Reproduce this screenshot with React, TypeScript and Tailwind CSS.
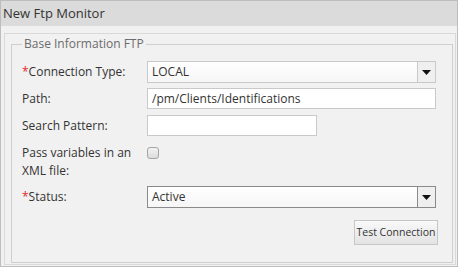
import React from 'react';

const font = { fontFamily: '"Open Sans", "Liberation Sans", sans-serif' };

const Caret: React.FC = () => (
  <svg width="9" height="5" viewBox="0 0 9 5">
    <path d="M0 0 H9 L4.5 5 Z" fill="#111" />
  </svg>
);

const Label: React.FC<{ text: string; required?: boolean }> = ({ text, required }) => (
  <div className="w-[125px] shrink-0 text-[12px] leading-[18px] text-[#333]">
    {required && <span className="text-[#e0262b]">*</span>}
    {text}
  </div>
);

const Select: React.FC<{ value: string; dark?: boolean }> = ({ value, dark }) => (
  <div
    className={`flex h-[22px] w-[289px] border bg-gradient-to-b from-white to-[#f6f6f6] ${
      dark ? 'border-[#8a8a8a]' : 'border-[#c9c9c9]'
    }`}
  >
    <div className="flex-1 px-[4px] text-[12px] leading-[20px] text-[#333]">{value}</div>
    <div
      className={`flex w-[18px] items-center justify-center border-l bg-[#efefef] ${
        dark ? 'border-[#8a8a8a]' : 'border-[#c9c9c9]'
      }`}
    >
      <Caret />
    </div>
  </div>
);

export default function App() {
  return (
    <div style={font} className="flex h-[267px] w-[458px] flex-col border border-[#bdbdbd] bg-[#f1f1f1]">
      <div className="h-[25px] shrink-0 bg-[#dbdbdb] pl-[2px] text-[13px] leading-[25px] text-[#333]">
        New Ftp Monitor
      </div>
      <div className="flex flex-1 flex-col pl-[3px] pr-[1px] pt-[7px] pb-[1px]">
        <div className="flex flex-1 flex-col border border-[#d9d9d9] pl-[6px] pr-[2px] pt-[2px] pb-[1px]">
          <fieldset className="flex-1 border border-[#cfcfcf] pl-[10px] pr-[14px]">
            <legend className="px-[2px] text-[12px] leading-[16px] text-[#6b6b6b]">
              Base Information FTP
            </legend>
            <div className="mt-[9px] flex items-center">
              <Label text="Connection Type:" required />
              <Select value="LOCAL" />
            </div>
            <div className="mt-[5px] flex items-center">
              <Label text="Path:" />
              <div className="h-[21px] w-[289px] border border-[#c9c9c9] bg-white px-[4px] text-[12px] leading-[19px] text-[#333]">
                /pm/Clients/Identifications
              </div>
            </div>
            <div className="mt-[6px] flex items-center">
              <Label text="Search Pattern:" />
              <div className="h-[21px] w-[170px] border border-[#c9c9c9] bg-white" />
            </div>
            <div className="mt-[8px] flex items-start">
              <div className="w-[125px] shrink-0 text-[12px] leading-[18px] text-[#333]">
                Pass variables in an XML file:
              </div>
              <div className="mt-[3px] h-[12px] w-[12px] rounded-[3px] border border-[#a5a5a5] bg-gradient-to-b from-[#f2f2f2] to-[#dcdcdc]" />
            </div>
            <div className="mt-[6px] flex items-center">
              <Label text="Status:" required />
              <Select value="Active" dark />
            </div>
            <div className="mt-[12px] flex justify-end">
              <button className="h-[25px] w-[84px] whitespace-nowrap border border-[#c6c6c6] bg-gradient-to-b from-[#f9f9f9] to-[#e3e3e3] px-0 text-[10.5px] text-[#333]">
                Test Connection
              </button>
            </div>
          </fieldset>
        </div>
      </div>
    </div>
  );
}
